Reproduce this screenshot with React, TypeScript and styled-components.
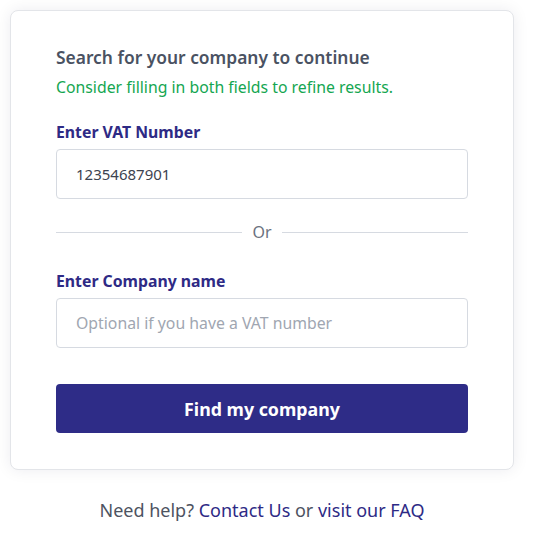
import React from "react";
import styled, { createGlobalStyle } from "styled-components";

const Global = createGlobalStyle`
  html, body { margin: 0; padding: 0; background: #ffffff; }
  body { font-family: "Noto Sans", "Open Sans", sans-serif; }
  * { box-sizing: border-box; }
`;

const Page = styled.div`
  padding: 10px 19px 0 10px;
  width: 533px;
`;

const Card = styled.div`
  width: 504px;
  background: #fff;
  border: 1px solid #e3e5e9;
  border-radius: 8px;
  box-shadow: 0 0 16px rgba(20, 30, 60, 0.08);
  padding: 33px 45px 36px 45px;
  display: flex;
  flex-direction: column;
`;

const Title = styled.h2`
  margin: 0;
  font-size: 17.4px;
  font-weight: 600;
  color: #4a5262;
  line-height: 26px;
`;

const Hint = styled.p`
  margin: 5px 0 0;
  font-size: 15.8px;
  color: #14a651;
  line-height: 24px;
`;

const Label = styled.label<{ $top: number }>`
  display: block;
  margin-top: ${(p) => p.$top}px;
  font-size: 15.8px;
  font-weight: 700;
  color: #2e2a85;
  line-height: 22px;
`;

const Input = styled.input`
  display: block;
  width: 100%;
  height: 50px;
  margin-top: 6px;
  border: 1px solid #d6dae1;
  border-radius: 4px;
  padding: 0 19px;
  font-family: inherit;
  font-size: 15px;
  color: #3d4350;
  background: #fff;
  outline: none;
  &::placeholder { color: #a0a6b1; font-size: 15.8px; }
`;

const Divider = styled.div`
  display: flex;
  align-items: center;
  gap: 10px;
  margin-top: 22px;
  font-size: 16px;
  color: #6b7280;
  line-height: 22px;
  &::before, &::after {
    content: "";
    flex: 1;
    height: 1px;
    background: #d6dae1;
  }
`;

const Button = styled.button`
  margin-top: 36px;
  height: 49px;
  width: 100%;
  border: none;
  border-radius: 4px;
  background: #2e2c87;
  color: #fff;
  font-family: inherit;
  font-size: 17.8px;
  font-weight: 700;
  cursor: pointer;
`;

const Footer = styled.p`
  margin: 28px 0 0;
  width: 504px;
  text-align: center;
  font-size: 18px;
  color: #4d5361;
  line-height: 24px;
`;

const Link = styled.a`
  color: #2e2a85;
  text-decoration: none;
`;

export default function App() {
  return (
    <>
      <Global />
      <Page>
        <Card>
          <Title>Search for your company to continue</Title>
          <Hint>Consider filling in both fields to refine results.</Hint>
          <Label $top={22}>Enter VAT Number</Label>
          <Input defaultValue="12354687901" />
          <Divider>Or</Divider>
          <Label $top={27}>Enter Company name</Label>
          <Input placeholder="Optional if you have a VAT number" />
          <Button>Find my company</Button>
        </Card>
        <Footer>
          Need help? <Link href="#">Contact Us</Link> or <Link href="#">visit our FAQ</Link>
        </Footer>
      </Page>
    </>
  );
}
